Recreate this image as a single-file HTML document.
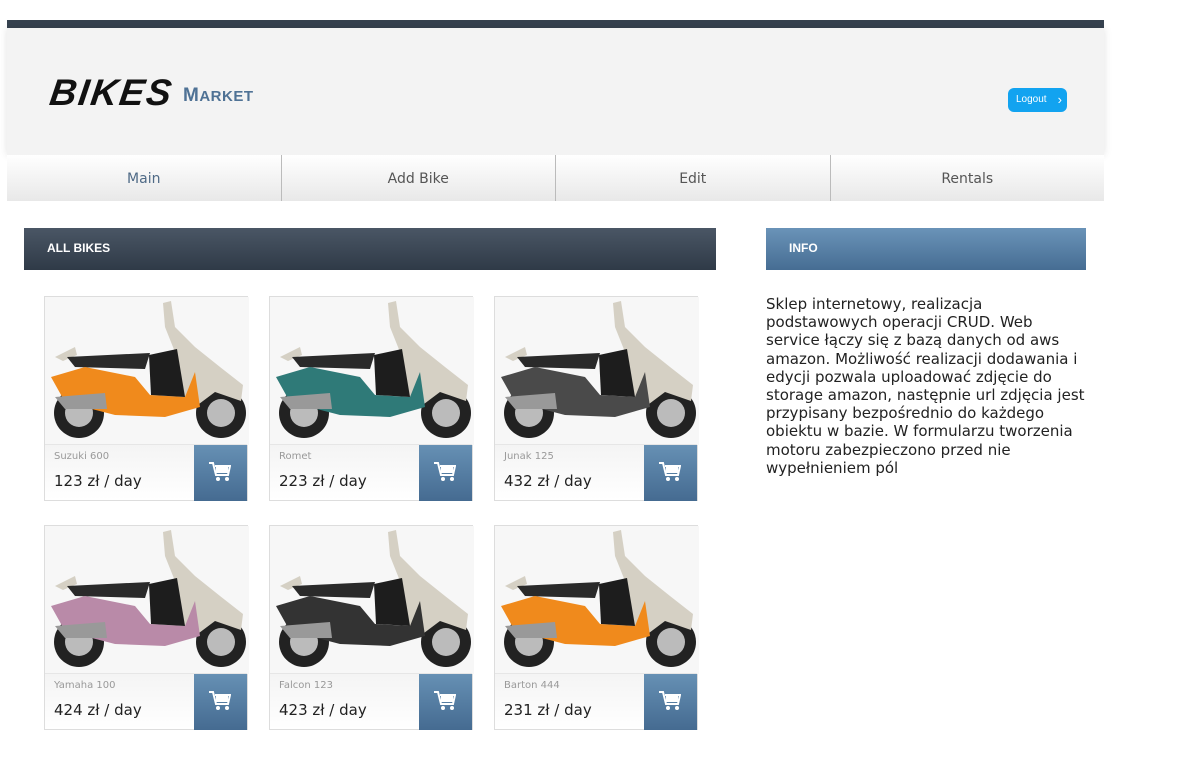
<!DOCTYPE html>
<html><head><meta charset="utf-8"><style>
*{margin:0;padding:0;box-sizing:border-box}
body{width:1186px;height:762px;background:#fff;font-family:"DejaVu Sans","Liberation Sans",sans-serif;position:relative;overflow:hidden}
.top{position:absolute;left:7px;top:20px;width:1097px;height:8px;background:#36424f}
.head{position:absolute;left:7px;top:28px;width:1097px;height:127px;background:#f3f3f3;box-shadow:0 0 8px rgba(0,0,0,.12)}
.logo{position:absolute;left:50px;top:72px;font-family:"Liberation Sans",sans-serif;font-weight:bold;font-style:italic;font-size:37px;color:#111;letter-spacing:2px;transform:skewX(-8deg)}
.logo2{position:absolute;left:183px;top:85px;font-family:"Liberation Sans",sans-serif;font-weight:bold;font-size:19px;color:#4f7295;letter-spacing:.5px}
.logo2 small{font-size:15px}
.logout{position:absolute;left:1008px;top:88px;width:59px;height:24px;background:#12a3f0;border-radius:6px;color:#fff;font-size:10px;line-height:24px;padding-left:8px;font-family:"Liberation Sans",sans-serif}
.logout:after{content:"›";position:absolute;right:5px;top:0;font-size:13px}
.nav{position:absolute;left:7px;top:155px;width:1097px;height:46px;display:flex;background:linear-gradient(#fff,#e8e8e8)}
.nav div{flex:1;text-align:center;line-height:48px;font-size:14px;color:#555;border-left:1px solid #bbb}
.nav div:first-child{border-left:none;color:#4f6a86}
.bar{position:absolute;top:228px;height:42px;color:#fff;font-weight:bold;font-size:12px;line-height:40px;padding-left:23px;font-family:"Liberation Sans",sans-serif}
.b1{left:24px;width:692px;background:linear-gradient(#4a5665,#2f3a47)}
.b2{left:766px;width:320px;background:linear-gradient(#6a93b8,#466d93)}
.info{position:absolute;left:766px;top:295px;width:322px;font-size:15px;line-height:18.2px;color:#222;letter-spacing:0}
.card{position:absolute;width:204px;height:205px;border:1px solid #ddd;background:#fff}
.card svg{position:absolute;left:0;top:0}
.bot{position:absolute;left:0;top:147px;width:202px;height:56px;background:linear-gradient(#f4f4f4,#fff);border-top:1px solid #e6e6e6}
.nm{position:absolute;left:9px;top:6px;font-size:10px;color:#999}
.pr{position:absolute;left:9px;top:27px;font-size:15px;color:#222}
.cart{position:absolute;right:0;top:0;width:53px;height:56px;background:linear-gradient(#6690b4,#456b91)}
.cart svg{left:15px;top:16px}
</style></head><body>
<svg width="0" height="0" style="position:absolute"><defs>
<g id="sc">
<rect x="0" y="0" width="204" height="148" fill="#f7f7f7"/>
<circle cx="34" cy="116" r="25" fill="#222"/><circle cx="34" cy="116" r="14" fill="#bbb"/>
<circle cx="176" cy="116" r="25" fill="#222"/><circle cx="176" cy="116" r="14" fill="#bbb"/>
<path d="M118 6 L126 4 L130 30 L150 50 L175 70 L198 88 L196 104 L170 95 L150 110 L140 112 L132 60 L120 30Z" fill="#d5d0c4"/>
<path d="M10 60 L30 50 L32 58 L18 64Z" fill="#d5d0c4"/>
<path d="M22 60 L105 56 L100 72 L30 70Z" fill="#2a2a2a"/>
<path d="M6 80 L40 70 L90 80 L105 98 L140 100 L150 75 L155 110 L120 120 L70 118 L20 105Z" fill="var(--c)"/>
<path d="M10 100 L60 96 L62 112 L20 112Z" fill="#999"/>
<path d="M104 58 L132 52 L140 100 L106 98Z" fill="#1d1d1d"/>
</g>
<g id="ct"><path d="M0 2h4l3 12h12l2-9H6" fill="none" stroke="#fff" stroke-width="2"/><rect x="7" y="6" width="12" height="6" fill="#fff"/><circle cx="9" cy="18" r="2" fill="#fff"/><circle cx="18" cy="18" r="2" fill="#fff"/></g>
</defs></svg>
<div class="top"></div><div class="head"></div>
<div class="logo">BIKES</div><div class="logo2">M<small>ARKET</small></div>
<div class="logout">Logout</div>
<div class="nav"><div>Main</div><div>Add Bike</div><div>Edit</div><div>Rentals</div></div>
<div class="bar b1">ALL BIKES</div><div class="bar b2">INFO</div>
<div class="info">Sklep internetowy, realizacja podstawowych operacji CRUD. Web service łączy się z bazą danych od aws amazon. Możliwość realizacji dodawania i edycji pozwala uploadować zdjęcie do storage amazon, następnie url zdjęcia jest przypisany bezpośrednio do każdego obiektu w bazie. W formularzu tworzenia motoru zabezpieczono przed nie wypełnieniem pól</div>

<div class="card" style="left:44px;top:296px;--c:#f08a1c"><svg width="204" height="148"><use href="#sc"/></svg><div class="bot"><div class="nm">Suzuki 600</div><div class="pr">123 zł / day</div><div class="cart"><svg width="22" height="22"><use href="#ct"/></svg></div></div></div>
<div class="card" style="left:269px;top:296px;--c:#2f7a78"><svg width="204" height="148"><use href="#sc"/></svg><div class="bot"><div class="nm">Romet</div><div class="pr">223 zł / day</div><div class="cart"><svg width="22" height="22"><use href="#ct"/></svg></div></div></div>
<div class="card" style="left:494px;top:296px;--c:#4a4a4a"><svg width="204" height="148"><use href="#sc"/></svg><div class="bot"><div class="nm">Junak 125</div><div class="pr">432 zł / day</div><div class="cart"><svg width="22" height="22"><use href="#ct"/></svg></div></div></div>
<div class="card" style="left:44px;top:525px;--c:#b98aa8"><svg width="204" height="148"><use href="#sc"/></svg><div class="bot"><div class="nm">Yamaha 100</div><div class="pr">424 zł / day</div><div class="cart"><svg width="22" height="22"><use href="#ct"/></svg></div></div></div>
<div class="card" style="left:269px;top:525px;--c:#333"><svg width="204" height="148"><use href="#sc"/></svg><div class="bot"><div class="nm">Falcon 123</div><div class="pr">423 zł / day</div><div class="cart"><svg width="22" height="22"><use href="#ct"/></svg></div></div></div>
<div class="card" style="left:494px;top:525px;--c:#f08a1c"><svg width="204" height="148"><use href="#sc"/></svg><div class="bot"><div class="nm">Barton 444</div><div class="pr">231 zł / day</div><div class="cart"><svg width="22" height="22"><use href="#ct"/></svg></div></div></div>
</body></html>
